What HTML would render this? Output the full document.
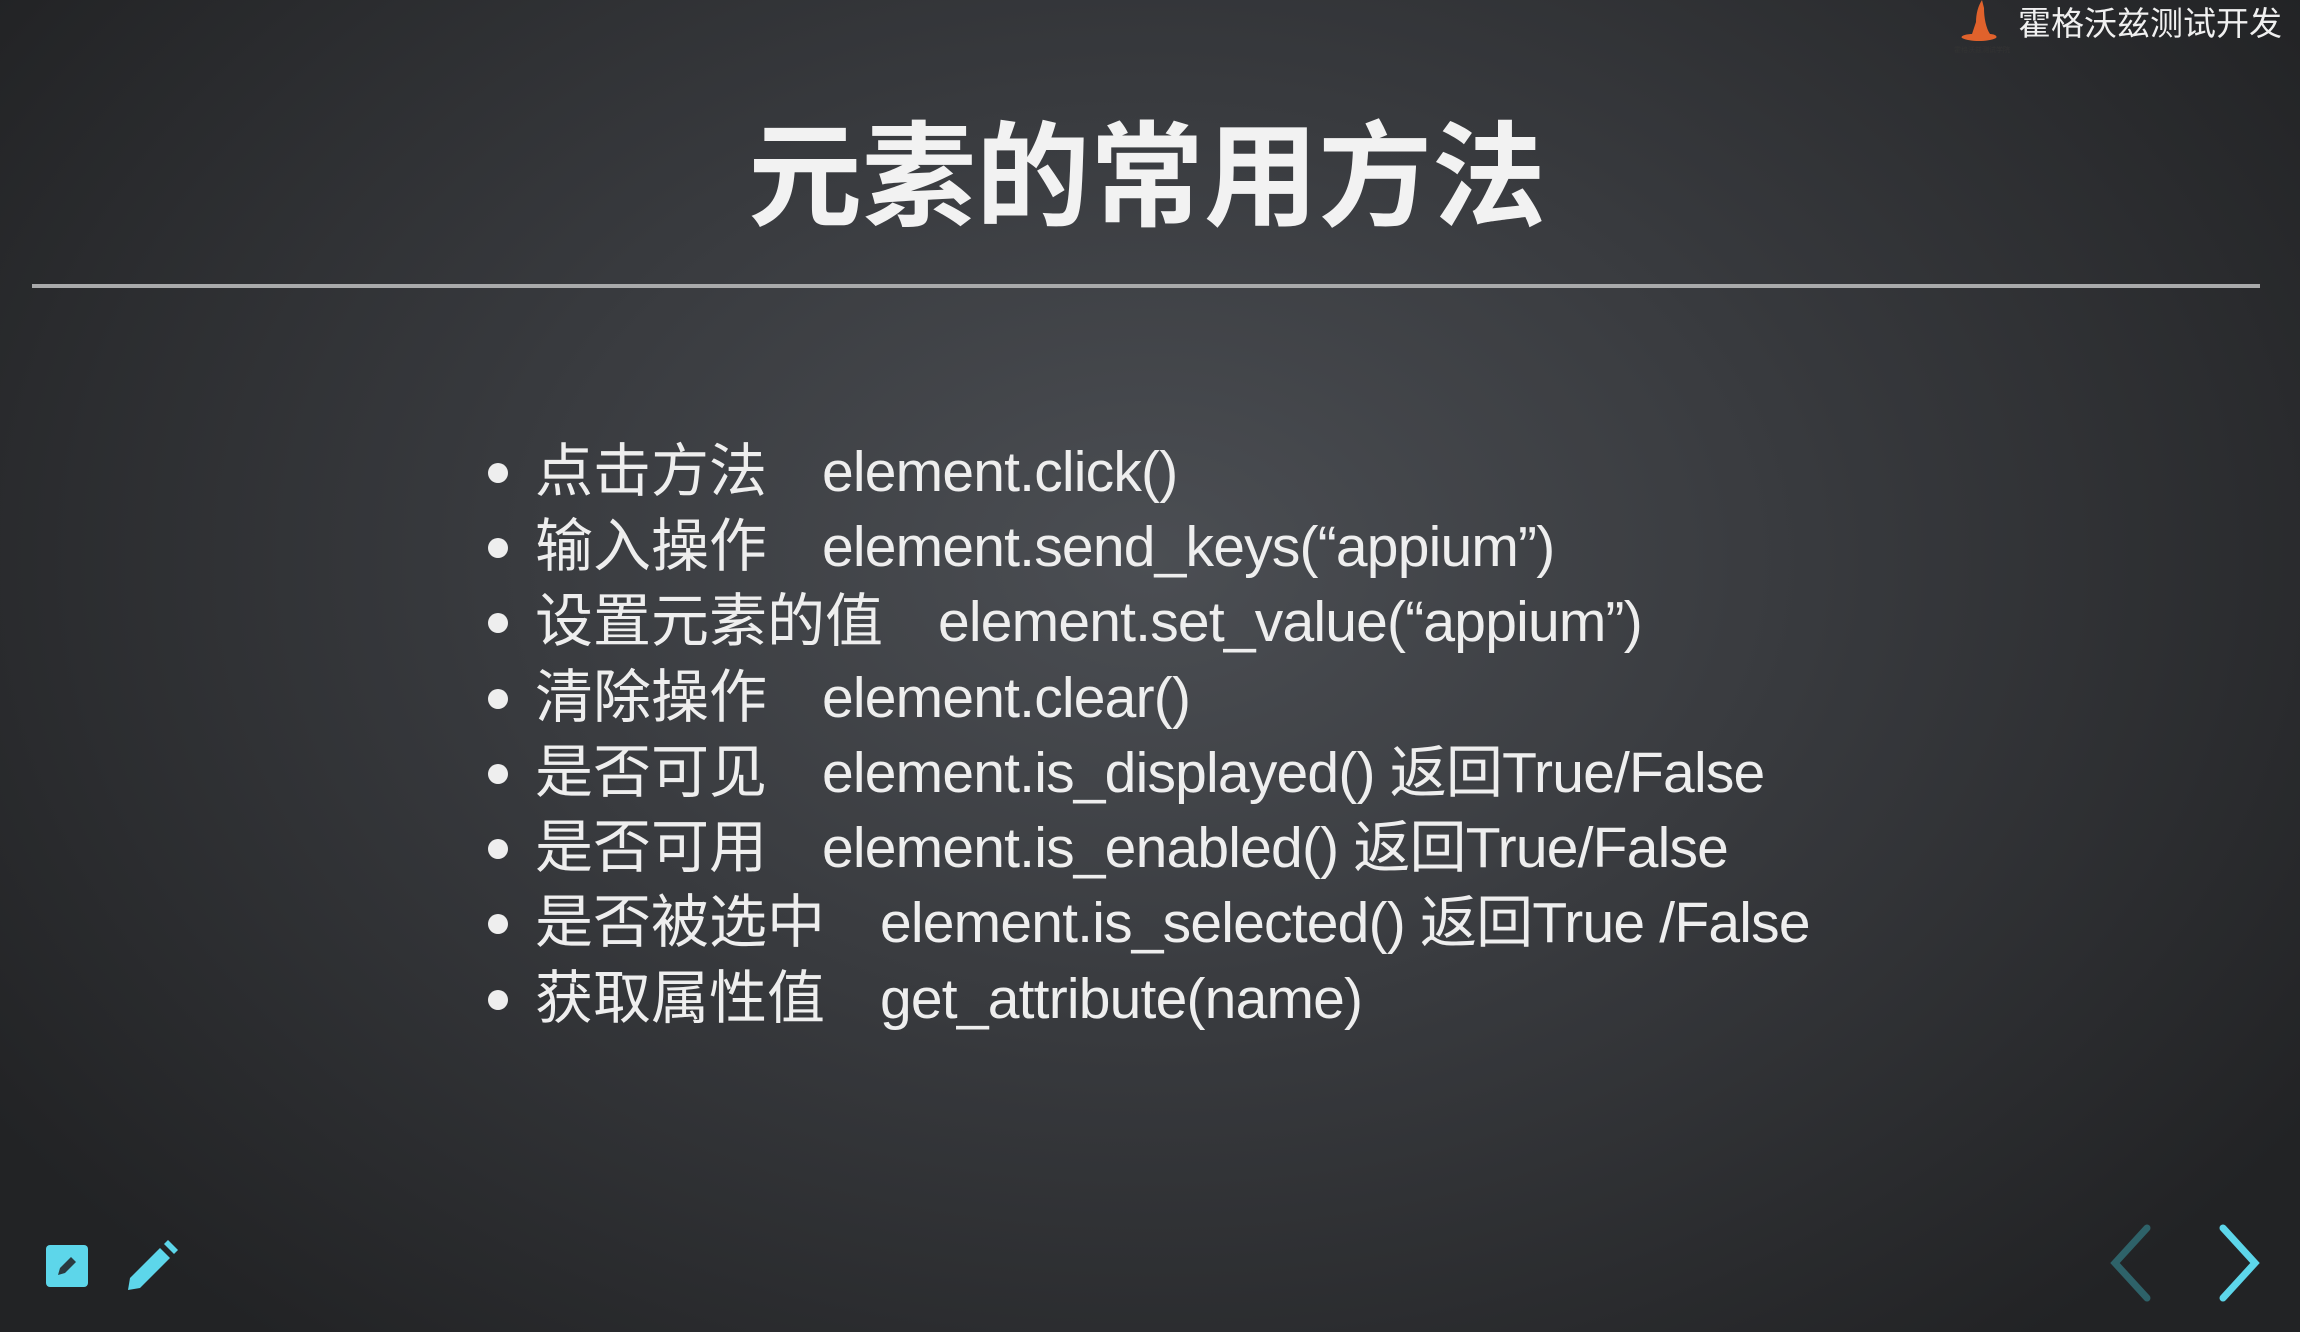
<!DOCTYPE html>
<html><head><meta charset="utf-8"><style>
html,body{margin:0;padding:0}
body{width:2300px;height:1332px;overflow:hidden;position:relative;
background:radial-gradient(ellipse 1400px 1000px at 1150px 560px,#4b4e53 0%,#393b3f 45%,#222325 100%);
font-family:"Liberation Sans","Noto Sans CJK SC",sans-serif;color:#eeeeee}
h1{position:absolute;left:0;width:2294px;top:122px;margin:0;text-align:center;font-size:114px;font-weight:bold;letter-spacing:0;color:#f2f2f2;line-height:1}
.rule{position:absolute;left:32px;width:2228px;top:284px;height:4px;background:#a9aaab}
.li{position:absolute;left:0;font-size:58px;line-height:1;white-space:nowrap}
.li .b{position:absolute;left:488px;top:20px;width:20px;height:20px;border-radius:50%;background:#eee}
.li .l{position:absolute;left:535px;top:0}
.li .c{position:absolute;top:1px;font-size:57px;letter-spacing:-0.8px}
.logo{position:absolute;left:2018px;top:-3px;font-size:33px;color:#f0f0f0}
</style></head><body>
<svg style="position:absolute;left:1950px;top:0" width="64" height="56" viewBox="0 0 64 56">
<path d="M32 0 C28 6 26 14 26 22 L22 34 C16 34 10 36 12 38 C20 42 38 42 46 38 C48 36 44 34 40 34 C36 28 34 18 34 8 Z" fill="#e0622c"/>
<text x="4" y="52" font-size="7" fill="#333">霍格沃兹测试学院</text>
</svg>
<div class="logo">霍格沃兹测试开发</div>
<h1>元素的常用方法</h1>
<div class="rule"></div>

<div class="li" style="top:443px"><span class="b"></span><span class="l">点击方法</span><span class="c" style="left:822px">element.click()</span></div>
<div class="li" style="top:518px"><span class="b"></span><span class="l">输入操作</span><span class="c" style="left:822px">element.send_keys(“appium”)</span></div>
<div class="li" style="top:593px"><span class="b"></span><span class="l">设置元素的值</span><span class="c" style="left:938px">element.set_value(“appium”)</span></div>
<div class="li" style="top:669px"><span class="b"></span><span class="l">清除操作</span><span class="c" style="left:822px">element.clear()</span></div>
<div class="li" style="top:744px"><span class="b"></span><span class="l">是否可见</span><span class="c" style="left:822px">element.is_displayed() 返回True/False</span></div>
<div class="li" style="top:819px"><span class="b"></span><span class="l">是否可用</span><span class="c" style="left:822px">element.is_enabled() 返回True/False</span></div>
<div class="li" style="top:894px"><span class="b"></span><span class="l">是否被选中</span><span class="c" style="left:880px">element.is_selected() 返回True /False</span></div>
<div class="li" style="top:970px"><span class="b"></span><span class="l">获取属性值</span><span class="c" style="left:880px">get_attribute(name)</span></div>

<svg style="position:absolute;left:46px;top:1245px" width="42" height="42" viewBox="0 0 42 42">
<rect x="0" y="0" width="42" height="42" rx="4" fill="#5dd6ea"/>
<path d="M12 30 L14 23 L25 12 L30 17 L19 28 Z" fill="#2a3a40"/>
</svg>
<svg style="position:absolute;left:124px;top:1240px" width="54" height="54" viewBox="0 0 54 54">
<path d="M4 50 L6 38 L36 8 L46 18 L16 48 Z" fill="#5dd6ea"/>
<path d="M40 4 L44 0 L54 10 L50 14 Z" fill="#5dd6ea"/>
</svg>
<svg style="position:absolute;left:2105px;top:1222px" width="50" height="82" viewBox="0 0 50 82">
<path d="M42 6 L10 41 L42 76" stroke="#2e6269" stroke-width="7" fill="none" stroke-linecap="round"/>
</svg>
<svg style="position:absolute;left:2215px;top:1222px" width="50" height="82" viewBox="0 0 50 82">
<path d="M8 6 L40 41 L8 76" stroke="#5dd6ea" stroke-width="7" fill="none" stroke-linecap="round"/>
</svg>
</body></html>
